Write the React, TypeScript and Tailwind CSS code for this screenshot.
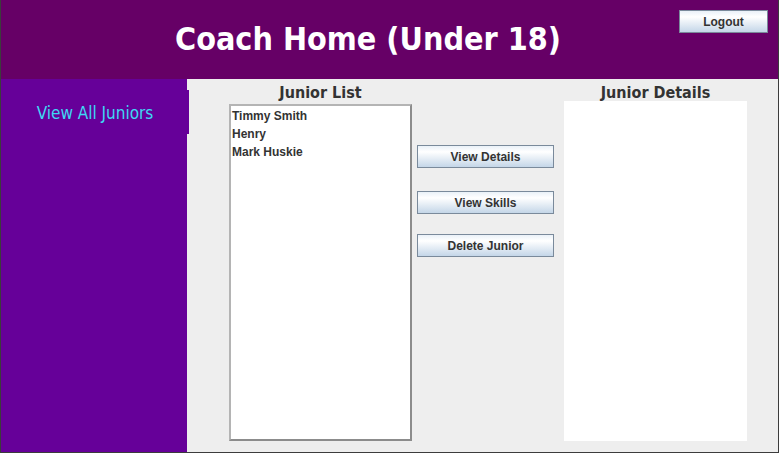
import React from "react";

const btn =
  "h-[23px] w-full border border-[#7a8a9b] bg-[linear-gradient(to_bottom,#eaf1f8_0%,#ffffff_28%,#c4d6e8_100%)] text-[12px] font-bold text-[#333333] leading-[23px] text-center font-['Liberation_Sans',Arial,sans-serif]";

const cond = "font-['DejaVu_Sans_Condensed','DejaVu_Sans',sans-serif]";

export default function App() {
  return (
    <div className="w-[779px] h-[453px] border-l border-r border-b border-[#3c3c3c] flex flex-col overflow-hidden">
      {/* Header */}
      <div className="h-[79px] bg-[#660066] flex items-start shrink-0">
        <div
          className={`flex-1 pl-[56px] text-center text-white font-bold text-[32px] leading-[79px] whitespace-nowrap ${cond}`}
        >
          Coach Home (Under 18)
        </div>
        <button className={`${btn} w-[89px]! mt-[10px] mr-[10px]`}>Logout</button>
      </div>

      {/* Body */}
      <div className="flex flex-1 min-h-0">
        {/* Sidebar */}
        <div className="w-[186px] bg-[#660099] shrink-0">
          <div
            className={`relative mt-[11px] h-[44px] w-[188px] pt-[3px] bg-[#660099] flex items-center justify-center text-[17px] text-[#3ed8f4] ${cond}`}
          >
            View All Juniors
          </div>
        </div>

        {/* Content */}
        <div className="flex-1 bg-[#eeeeee] flex items-stretch pb-[11px]">
          {/* Junior List */}
          <div className="ml-[42px] w-[183px] flex flex-col">
            <div
              className={`h-[25px] leading-[27px] text-center font-bold text-[16px] text-[#333333] whitespace-nowrap ${cond}`}
            >
              Junior List
            </div>
            <div className="flex-1 bg-white border-2 border-t-[#b4b4b4] border-l-[#b4b4b4] border-r-[#8c8c8c] border-b-[#8c8c8c] pt-[1px] pl-[1px] font-['Liberation_Sans',Arial,sans-serif] text-[12px] font-bold text-[#333333] leading-[18px]">
              <div>Timmy Smith</div>
              <div>Henry</div>
              <div>Mark Huskie</div>
            </div>
          </div>

          {/* Buttons */}
          <div className="ml-[5px] w-[137px] flex flex-col">
            <button className={`${btn} mt-[66px]`}>View Details</button>
            <button className={`${btn} mt-[23px]`}>View Skills</button>
            <button className={`${btn} mt-[20px]`}>Delete Junior</button>
          </div>

          {/* Junior Details */}
          <div className="ml-[10px] w-[183px] flex flex-col">
            <div
              className={`h-[22px] leading-[27px] text-center font-bold text-[16px] text-[#333333] whitespace-nowrap ${cond}`}
            >
              Junior Details
            </div>
            <div className="flex-1 bg-white" />
          </div>
        </div>
      </div>
    </div>
  );
}
